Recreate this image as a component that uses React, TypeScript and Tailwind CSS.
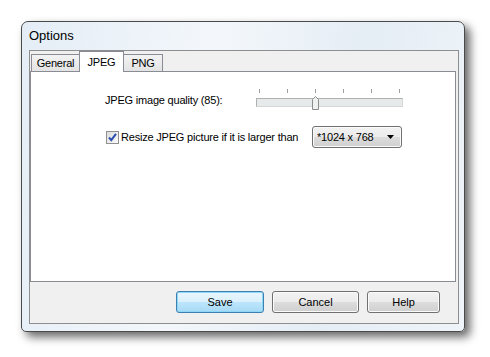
import React from "react";

const ui = { fontFamily: '"Liberation Sans", Arial, sans-serif' };

function Tab({ label, active, w }: { label: string; active?: boolean; w: string }) {
  if (active) {
    return (
      <div
        className={`${w} h-[21px] -mb-px -ml-px relative z-10 flex items-start justify-center pt-[2px] bg-white border border-b-0 border-[#898c95] text-[11px] tracking-[-0.2px] text-black`}
      >
        {label}
      </div>
    );
  }
  return (
    <div
      className={`${w} h-[17px] mt-[3px] -ml-px first:ml-0 flex items-center justify-center border border-b-0 border-[#898c95] bg-gradient-to-b from-[#f3f3f3] to-[#e3e3e3] text-[11px] tracking-[-0.2px] text-black`}
    >
      {label}
    </div>
  );
}

function Button({ label, primary, w }: { label: string; primary?: boolean; w: string }) {
  return (
    <button
      className={`${w} h-[22px] rounded-[3px] border text-[11px] text-black flex items-center justify-center ${
        primary
          ? "border-[#3c7fb1] bg-[linear-gradient(#eaf6fd_0%,#d9f0fc_50%,#bee6fd_50%,#a7d9f5_100%)] shadow-[inset_0_0_0_1px_#8fd7f7]"
          : "border-[#707070] bg-[linear-gradient(#f2f2f2_0%,#ebebeb_50%,#dddddd_50%,#cfcfcf_100%)] shadow-[inset_0_0_0_1px_#fbfbfb]"
      }`}
    >
      {label}
    </button>
  );
}

function Slider() {
  return (
    <div className="w-[147px] flex flex-col">
      {/* 目盛り */}
      <div className="h-[4px] flex justify-between px-[3px]">
        {[0, 1, 2, 3, 4, 5].map((i) => (
          <div key={i} className="w-px h-[4px] bg-[#a0a0a0]" />
        ))}
      </div>
      <div className="relative mt-[5px] h-[9px] border border-[#b0b0b0] border-b-[#d6d6d6] border-r-[#d6d6d6] bg-[#e7eaea]">
        <svg className="absolute left-[55px] -top-[3px]" width="7" height="14" viewBox="0 0 7 14">
          <path d="M0.5 3.5 L3.5 0.5 L6.5 3.5 L6.5 13.5 L0.5 13.5 Z" fill="#eef0f0" stroke="#8c8c8c" />
        </svg>
      </div>
    </div>
  );
}

function Checkbox() {
  return (
    <div className="w-[13px] h-[13px] border border-[#8f8f8f] bg-[linear-gradient(135deg,#dcdcdc,#fbfbfb)] flex items-center justify-center">
      <svg width="11" height="11" viewBox="0 0 11 11">
        <path d="M2 5.5 L4.3 8.2 L9 1.8" fill="none" stroke="#2b4fb0" strokeWidth="2" />
      </svg>
    </div>
  );
}

export default function App() {
  return (
    <div className="w-[490px] h-[357px] bg-white pt-[21px] pl-[21px]" style={ui}>
      {/* ウィンドウ */}
      <div className="w-[444px] h-[311px] rounded-t-[7px] rounded-b-[5px] border border-[#4a4a4a] shadow-[5px_5px_10px_rgba(0,0,0,0.6)] bg-[linear-gradient(100deg,#e4edf6_0%,#f3f7fb_40%,#e5edf5_70%,#eef4f9_100%)] flex flex-col pl-[7px] pr-[5px] pb-[7px]">
        <div className="h-[28px] flex items-center text-[13px] text-black">Options</div>

        {/* クライアント領域 */}
        <div className="flex-1 border border-[#8e8e8e] bg-[#f0f0f0] flex flex-col">
          <div className="h-[20px] flex items-start pl-px">
            <Tab label="General" w="w-[49px]" />
            <Tab label="JPEG" w="w-[45px]" active />
            <Tab label="PNG" w="w-[40px]" />
          </div>

          <div className="h-[211px] mr-[2px] border border-[#898c95] bg-white flex flex-col text-[11px] tracking-[-0.2px] text-black">
            <div className="mt-[17px] flex items-start pl-[74px] h-[21px]">
              <div className="w-[151px] mt-[3px]">JPEG image quality (85):</div>
              <Slider />
            </div>

            <div className="mt-[16px] flex items-center pl-[75px] h-[22px]">
              <Checkbox />
              <div className="w-[193px] pl-[2px]">Resize JPEG picture if it is larger than</div>
              <div className="w-[90px] h-[22px] rounded-[3px] border border-[#707070] bg-[linear-gradient(#f2f2f2_0%,#ebebeb_50%,#dddddd_50%,#cfcfcf_100%)] shadow-[inset_0_0_0_1px_#fbfbfb] flex items-center justify-between pl-[4px] pr-[7px]">
                <span>*1024 x 768</span>
                <svg width="7" height="4" viewBox="0 0 7 4">
                  <path d="M0 0 L7 0 L3.5 4 Z" fill="#000" />
                </svg>
              </div>
            </div>
          </div>

          <div className="mt-[9px] flex justify-end gap-[8px] pr-[18px]">
            <Button label="Save" w="w-[88px]" primary />
            <Button label="Cancel" w="w-[87px]" />
            <Button label="Help" w="w-[73px]" />
          </div>
        </div>
      </div>
    </div>
  );
}
